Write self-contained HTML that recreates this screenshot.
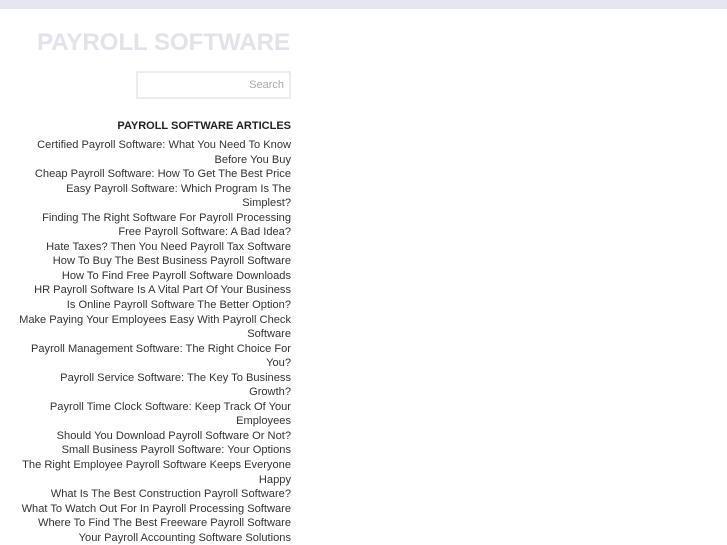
<!DOCTYPE html>
<html><head><meta charset="utf-8"><style>
body{margin:0;background:#fff;font-family:"Liberation Sans",sans-serif;width:727px;height:545px;overflow:hidden;position:relative}
.bar{position:absolute;left:0;top:0;width:727px;height:9px;background:#e6e6ee}
h1{position:absolute;right:437px;top:29px;margin:0;font-size:24px;font-weight:bold;color:#e2e2ea;white-space:nowrap;letter-spacing:0}
.search{position:absolute;left:136px;top:71px;width:151px;height:24px;border:2px solid #ebebf0;box-sizing:content-box}
.search span{position:absolute;right:5px;top:6px;font-size:11px;color:#aaa}
h2{position:absolute;right:436px;top:120px;margin:0;font-size:11px;font-weight:bold;color:#222;white-space:nowrap}
ul{position:absolute;left:16px;top:138px;width:275px;margin:0;padding:0;list-style:none;text-align:right;font-size:11.1px;line-height:14.55px;color:#333}
</style></head><body>
<div class="bar"></div>
<h1>PAYROLL SOFTWARE</h1>
<div class="search"><span>Search</span></div>
<h2>PAYROLL SOFTWARE ARTICLES</h2>
<ul>
<li>Certified Payroll Software: What You Need To Know Before You Buy</li>
<li>Cheap Payroll Software: How To Get The Best Price</li>
<li>Easy Payroll Software: Which Program Is The Simplest?</li>
<li>Finding The Right Software For Payroll Processing</li>
<li>Free Payroll Software: A Bad Idea?</li>
<li>Hate Taxes? Then You Need Payroll Tax Software</li>
<li>How To Buy The Best Business Payroll Software</li>
<li>How To Find Free Payroll Software Downloads</li>
<li>HR Payroll Software Is A Vital Part Of Your Business</li>
<li>Is Online Payroll Software The Better Option?</li>
<li>Make Paying Your Employees Easy With Payroll Check Software</li>
<li>Payroll Management Software: The Right Choice For You?</li>
<li>Payroll Service Software: The Key To Business Growth?</li>
<li>Payroll Time Clock Software: Keep Track Of Your Employees</li>
<li>Should You Download Payroll Software Or Not?</li>
<li>Small Business Payroll Software: Your Options</li>
<li>The Right Employee Payroll Software Keeps Everyone Happy</li>
<li>What Is The Best Construction Payroll Software?</li>
<li>What To Watch Out For In Payroll Processing Software</li>
<li>Where To Find The Best Freeware Payroll Software</li>
<li>Your Payroll Accounting Software Solutions</li>
</ul>
</body></html>
